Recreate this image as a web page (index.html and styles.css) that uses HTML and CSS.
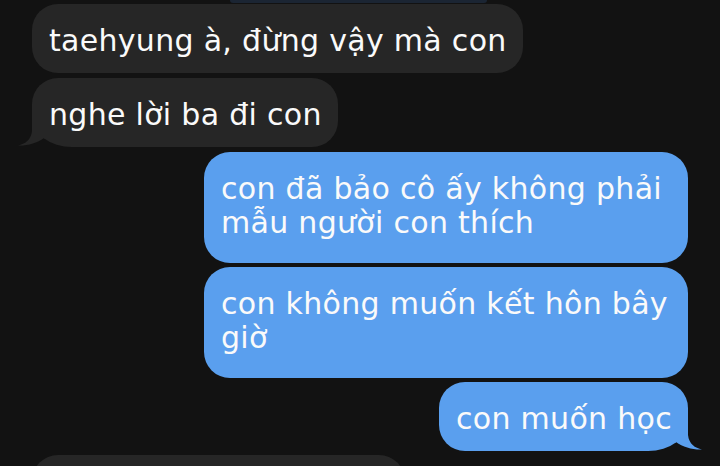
FILE: index.html
```html
<!DOCTYPE html>
<html lang="vi">
<head>
<meta charset="utf-8">
<title>Tin nhắn</title>
<link rel="stylesheet" href="styles.css">
</head>
<body>
<div class="thread">
  <div class="prev-edge"></div>
  <div class="bubble in">taehyung à, đừng vậy mà con</div>
  <div class="bubble in tail-in gap5">nghe lời ba đi con<svg class="tail" viewBox="0 0 30 34"><path d="M2,25 C9,30 19,33 28,32.5 C21,31 15,27 14,18 L14,0 L2,0 Z"/></svg></div>
  <div class="bubble out multi gap5">con đã bảo cô ấy không phải mẫu người con thích</div>
  <div class="bubble out multi">con không muốn kết hôn bây giờ</div>
  <div class="bubble out tail-out">con muốn học<svg class="tail" viewBox="0 0 30 34"><path d="M2,25 C9,30 19,33 28,32.5 C21,31 15,27 14,18 L14,0 L2,0 Z"/></svg></div>
  <div class="bubble in next"></div>
</div>
</body>
</html>
```

FILE: styles.css
```css
html, body {
  margin: 0;
  padding: 0;
}
body {
  background: #121212;
  height: 466px;
  overflow: hidden;
  font-family: "DejaVu Sans", "Noto Sans", sans-serif;
}
.thread {
  display: flex;
  flex-direction: column;
  align-items: flex-start;
  padding: 0 32px;
}
.prev-edge {
  width: 257px;
  height: 3px;
  margin-left: 198px;
  margin-bottom: 1px;
  background: #1b2533;
  border-radius: 0 0 4px 4px;
}
.bubble {
  box-sizing: border-box;
  position: relative;
  max-width: 560px;
  padding: 20px 16px 15px 17px;
  font-size: 30px;
  line-height: 34px;
  letter-spacing: 0.3px;
  color: #fafafa;
  border-radius: 26px;
}
.bubble + .bubble {
  margin-top: 4px;
}
.bubble.gap5 {
  margin-top: 5px;
}
.bubble.in {
  background: #262626;
}
.bubble.out {
  background: #5a9fee;
  align-self: flex-end;
  max-width: 484px;
}
.bubble.multi {
  padding-bottom: 23px;
}
.bubble.tail-in {
  border-bottom-left-radius: 40px 30px;
}
.bubble.tail-out {
  border-bottom-right-radius: 40px 30px;
}
.tail {
  position: absolute;
  bottom: 0;
  width: 30px;
  height: 34px;
}
.tail-out .tail {
  right: -16px;
  fill: #5a9fee;
}
.tail-in .tail {
  left: -16px;
  transform: scaleX(-1);
  fill: #262626;
}
.bubble.next {
  width: 373px;
  height: 70px;
}
```
